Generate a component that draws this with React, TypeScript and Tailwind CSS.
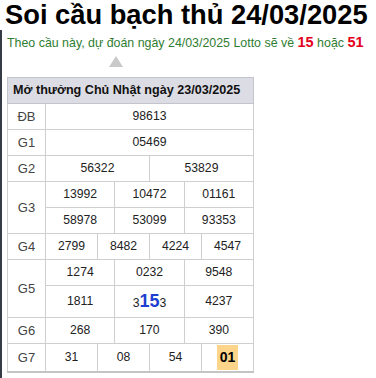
const font = { fontFamily: '"Liberation Sans", Arial, sans-serif' };

type Cell = { v: React.ReactNode; span: number };
type Row = { label?: string; rowSpan?: number; cells: Cell[]; h: string };

const rows: Row[] = [
  { label: 'ĐB', h: 'h-[26px]', cells: [{ v: '98613', span: 12 }] },
  { label: 'G1', h: 'h-[26px]', cells: [{ v: '05469', span: 12 }] },
  { label: 'G2', h: 'h-[26px]', cells: [{ v: '56322', span: 6 }, { v: '53829', span: 6 }] },
  { label: 'G3', h: 'h-[26px]', rowSpan: 2, cells: [{ v: '13992', span: 4 }, { v: '10472', span: 4 }, { v: '01161', span: 4 }] },
  { h: 'h-[26px]', cells: [{ v: '58978', span: 4 }, { v: '53099', span: 4 }, { v: '93353', span: 4 }] },
  { label: 'G4', h: 'h-[26px]', cells: ['2799', '8482', '4224', '4547'].map((v) => ({ v, span: 3 })) },
  { label: 'G5', h: 'h-[26px]', rowSpan: 2, cells: [{ v: '1274', span: 4 }, { v: '0232', span: 4 }, { v: '9548', span: 4 }] },
  {
    h: 'h-[32px]',
    cells: [
      { v: '1811', span: 4 },
      {
        v: (
          <>
            3<b className="text-[18px] text-[#1e3fd0]">15</b>3
          </>
        ),
        span: 4,
      },
      { v: '4237', span: 4 },
    ],
  },
  { label: 'G6', h: 'h-[26px]', cells: [{ v: '268', span: 4 }, { v: '170', span: 4 }, { v: '390', span: 4 }] },
  {
    label: 'G7',
    h: 'h-[28px]',
    cells: [
      { v: '31', span: 3 },
      { v: '08', span: 3 },
      { v: '54', span: 3 },
      { v: <b className="inline-block bg-[#fcd48a] px-[3px] py-[2px] text-[14px] text-black">01</b>, span: 3 },
    ],
  },
];

export default function App() {
  return (
    <div className="w-[376px] h-[378px] bg-white overflow-hidden" style={font}>
      <h1 className="text-[27.3px] font-bold leading-[30px] text-black pl-[5px]">Soi cầu bạch thủ 24/03/2025</h1>
      <div className="border-l-2 border-[#363c46] pl-[5px] pt-[4px] pb-4">
        <p className="text-[12.4px] text-[#2f7d32] leading-[16px]">
          Theo cầu này, dự đoán ngày 24/03/2025 Lotto sẽ về <b className="text-[14.5px] text-[#e3001b]">15</b> hoặc{' '}
          <b className="text-[14.5px] text-[#e3001b]">51</b>
        </p>
        <div className="ml-[102px] mt-[5px] w-0 h-0 border-l-[7px] border-r-[7px] border-b-[11px] border-l-transparent border-r-transparent border-b-[#c9c9c9]" />
        <table className="mt-[10px] w-[247px] table-fixed border-collapse border-b-2 border-b-[#c4c4c4] text-[12.2px] text-[#222]">
          <colgroup>
            <col className="w-[38px]" />
            {Array.from({ length: 12 }).map((_, i) => (
              <col key={i} />
            ))}
          </colgroup>
          <thead>
            <tr>
              <th colSpan={13} className="h-[26px] bg-[#dcdce4] border border-[#c4c4cc] text-left pl-[5px] text-[12.6px] font-bold text-[#111]">
                Mở thưởng Chủ Nhật ngày 23/03/2025
              </th>
            </tr>
          </thead>
          <tbody>
            {rows.map((r, i) => (
              <tr key={i} className={r.h}>
                {r.label && (
                  <td rowSpan={r.rowSpan} className="border border-[#cfcfcf] text-center text-[13px] text-[#444]">
                    {r.label}
                  </td>
                )}
                {r.cells.map((c, j) => (
                  <td key={j} colSpan={c.span} className="border border-[#cfcfcf] text-center p-0">
                    {c.v}
                  </td>
                ))}
              </tr>
            ))}
          </tbody>
        </table>
      </div>
    </div>
  );
}
